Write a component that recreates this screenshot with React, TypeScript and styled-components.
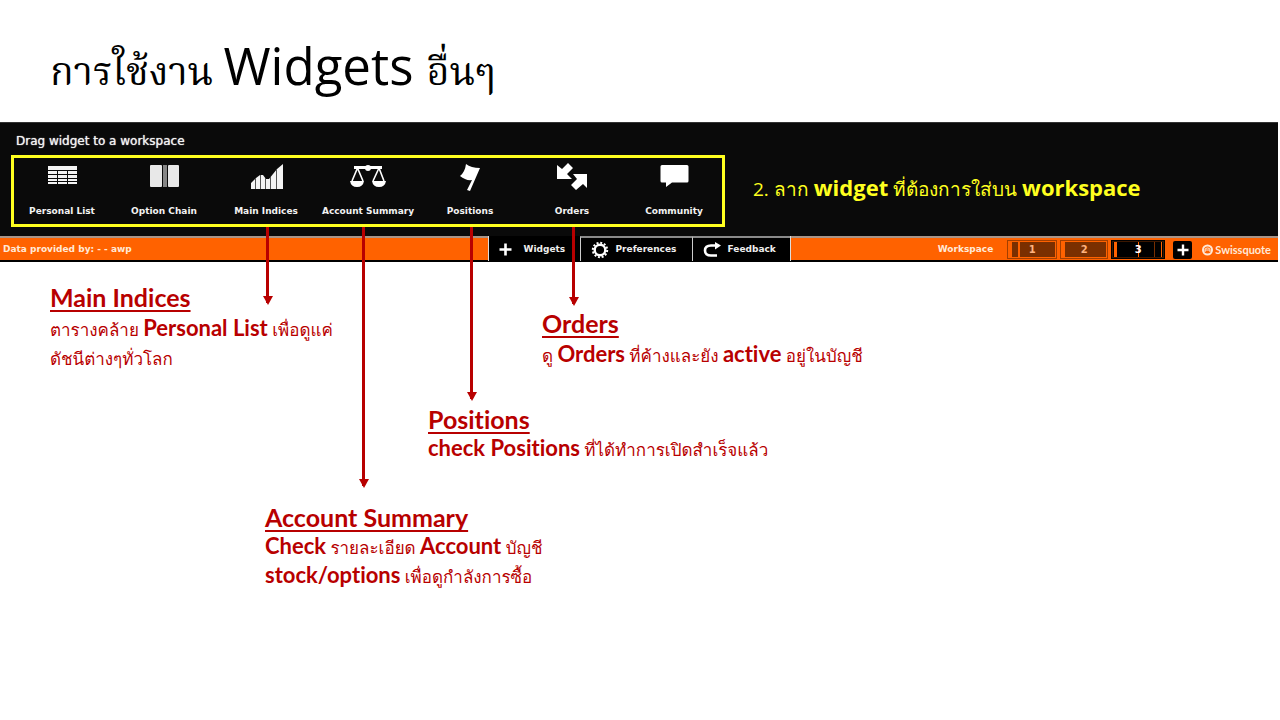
import React from "react";
import styled, { createGlobalStyle } from "styled-components";

const RED = "#b80000";
const YELLOW = "#ffff1f";
const ORANGE = "#ff6200";

const GlobalStyle = createGlobalStyle`
  * { box-sizing: border-box; }
  body { margin: 0; background: #fff; }
`;

const Slide = styled.main`
  font-family: Lato, Loma, "Noto Sans Thai Looped", sans-serif;
  font-variant-ligatures: none;
  min-height: 100vh;
`;

const Title = styled.h1`
  margin: 0;
  height: 122px;
  padding: 26px 50px 0;
  font: 400 51px/78px "Open Sans", serif;
  color: #000;
  white-space: nowrap;
`;

const ThaiTitle = styled.span`
  font-family: "Noto Serif Thai", Norasi, serif;
  font-weight: 400;
  font-size: 39px;
`;

const Panel = styled.section`
  margin-right: 2px;
  background: #0a0a0a;
  border-top: 1px solid #333;
  border-bottom: 2px solid #000;
  font-family: "DejaVu Sans", sans-serif;
`;

const PanelHint = styled.p`
  margin: 0;
  padding: 10px 16px 6px;
  font-size: 12px;
  line-height: 16px;
  color: #f2f2f2;
  text-shadow: 0 0 1px #f2f2f2;
`;

const PanelRow = styled.div`
  display: flex;
  align-items: center;
  padding-left: 11px;
  gap: 28px;
`;

const WidgetList = styled.ul`
  margin: 0;
  padding: 0;
  list-style: none;
  display: grid;
  grid-template-columns: repeat(7, 102px);
  height: 72px;
  box-shadow: inset 0 0 0 3px ${YELLOW};
`;

const WidgetItem = styled.li`
  position: relative;
  display: flex;
  flex-direction: column;
  align-items: center;
`;

const WidgetButton = styled.button`
  border: 0;
  padding: 5px 0 0;
  background: none;
  color: #f2f2f2;
  display: flex;
  flex-direction: column;
  align-items: center;
  gap: 12px;
  font: 700 9px/14px "DejaVu Sans", sans-serif;
  white-space: nowrap;
  svg { display: block; }
`;

const Arrow = styled.span<{ $length: number; $shift?: number }>`
  position: absolute;
  z-index: 2;
  top: 100%;
  left: calc(50% + ${(p) => p.$shift ?? 0}px);
  width: 3px;
  height: ${(p) => p.$length}px;
  background: ${RED};
  &::after {
    content: "";
    position: absolute;
    left: -3px;
    bottom: -2px;
    border: solid transparent;
    border-width: 9px 5px 0;
    border-top-color: ${RED};
  }
`;

const Instruction = styled.p`
  margin: 0;
  padding-bottom: 6px;
  color: ${YELLOW};
  font-size: 19px;
  line-height: 30px;
  font-family: "Open Sans", sans-serif;
  white-space: nowrap;
  b { font-size: 22px; }
`;

const Bar = styled.nav`
  margin-top: 9px;
  height: 24px;
  display: grid;
  grid-template-columns: 1fr auto 1fr;
  background: ${ORANGE};
  color: #ffe9d8;
  font: 700 9px/23px "DejaVu Sans", sans-serif;
`;

const BarSide = styled.div<{ $end?: boolean }>`
  display: flex;
  align-items: center;
  justify-content: ${(p) => (p.$end ? "flex-end" : "flex-start")};
  padding: 0 ${(p) => (p.$end ? 7 : 3)}px;
  border-top: 2px solid #a89488;
`;

const Tabs = styled.div`
  display: flex;
  border-left: 1px solid #ddd;
  border-right: 1px solid #ddd;
`;

const Tab = styled.button<{ $active?: boolean; $width: number }>`
  width: ${(p) => p.$width}px;
  border: 0;
  border-top: 2px solid ${(p) => (p.$active ? "#000" : "#8a8a8a")};
  border-left: ${(p) => (p.$active ? "0" : "1px solid #ccc")};
  padding: 0 0 0 10px;
  background: #000;
  color: #eee;
  font: inherit;
  display: flex;
  align-items: center;
  gap: 7px;
`;

const Spaces = styled.div`
  display: flex;
  gap: 3px;
  margin: 0 8px 0 14px;
`;

const spaceFills = {
  split: `linear-gradient(90deg, ${ORANGE} 4px, #7a2f00 4px 10px, ${ORANGE} 10px 12px, #7a2f00 12px)`,
  plain: `linear-gradient(90deg, ${ORANGE} 4px, #7a2f00 4px)`,
  active: `linear-gradient(90deg, #000 2px, ${ORANGE} 2px 5px, #000 5px 26px, ${ORANGE} 26px 27px, #000 27px 42px, #7a2f00 42px 43px, #000 43px 49px, ${ORANGE} 49px 50px, #000 50px)`,
};

const Space = styled.button<{ $fill: keyof typeof spaceFills; $width: number }>`
  width: ${(p) => p.$width}px;
  height: 19px;
  padding: 0;
  border: 1px solid ${(p) => (p.$fill === "active" ? "#000" : "#a33f00")};
  box-shadow: inset 0 0 0 1px ${(p) => (p.$fill === "active" ? "#3b1700" : ORANGE)};
  background: ${(p) => spaceFills[p.$fill]};
  color: ${(p) => (p.$fill === "active" ? "#fff" : "#ffb27d")};
  font: 700 10px/16px "DejaVu Sans", sans-serif;
`;

const AddButton = styled.button`
  width: 19px;
  height: 18px;
  padding: 0;
  border: 0;
  border-radius: 2px;
  background: #000;
  display: grid;
  place-items: center;
`;

const Brand = styled.a`
  margin-left: 10px;
  display: flex;
  align-items: center;
  gap: 2px;
  color: #ffe9d8;
  text-decoration: none;
  font: 700 11px/18px Lato, sans-serif;
`;

const Notes = styled.section`
  padding: 19px 50px 0;
  color: ${RED};
`;

const NoteRow = styled.div`
  display: grid;
  grid-template-columns: 492px 1fr;
  align-items: start;
`;

const Note = styled.article<{ $indent?: number; $drop?: number; $gap?: number }>`
  margin-left: ${(p) => p.$indent ?? 0}px;
  margin-top: ${(p) => p.$drop ?? 0}px;
  font-size: 17px;
  line-height: 29px;
  white-space: nowrap;
  h2 {
    margin: 0 0 ${(p) => p.$gap ?? 0}px;
    font-size: 25px;
    line-height: 32px;
    font-weight: 700;
    text-decoration: underline;
    text-decoration-thickness: 2px;
    text-underline-offset: 3px;
    text-decoration-skip-ink: none;
  }
  p { margin: 0; }
  b { font-size: 22px; line-height: 0; }
`;

const TableIcon = () => (
  <svg width="32" height="32" viewBox="0 0 32 32" fill="#f4f4f4">
    <path d="M2 6h29v4H2zM2 11h9v3H2zM12 11h9v3h-9zM22 11h9v3h-9zM2 15h9v3H2zM12 15h9v3h-9zM22 15h9v3h-9zM2 19h9v2H2zM12 19h9v2h-9zM22 19h9v2h-9zM2 22h9v2H2zM12 22h9v2h-9zM22 22h9v2h-9z" />
  </svg>
);

const ChainIcon = () => (
  <svg width="32" height="32" viewBox="0 0 32 32">
    <rect x="2" y="5" width="12" height="22" rx="1" fill="#e8e8e8" />
    <rect x="15" y="5" width="4" height="22" fill="#858585" />
    <rect x="20" y="5" width="11" height="22" rx="1" fill="#e8e8e8" />
  </svg>
);

const ChartIcon = () => (
  <svg width="34" height="32" viewBox="0 0 34 32">
    <path d="M2 29V23L7 18 11 15 14 15 17 19 20 19 24 14 28 9 34 4V29Z" fill="#f4f4f4" />
    <path d="M6.500 18V29M11.500 15V29M16.500 18V29M21.500 17V29M27.500 9V29" stroke="#555" />
  </svg>
);

const ScalesIcon = () => (
  <svg width="36" height="32" viewBox="0 0 36 32" fill="none" stroke="#fff" strokeWidth="1.600">
    <path d="M4 7.500H32" strokeWidth="3" />
    <circle cx="18" cy="8" r="3" fill="#fff" stroke="none" />
    <path d="M7.500 8L2 21M7.500 8L13 21M29 8L23 21M29 8L34 21" />
    <path d="M0 21H14Q13 27 7 27T0 21ZM22 21H36Q35 27 29 27T22 21Z" fill="#fff" stroke="none" />
  </svg>
);

const FlagIcon = () => (
  <svg width="32" height="32" viewBox="0 0 32 32" fill="#fff">
    <path d="M12 4Q17 8 26 8L16 31 13 30 18 20Q12 21 6 16Q11 12 12 4Z" />
  </svg>
);

const OrdersIcon = () => (
  <svg width="32" height="32" viewBox="0 0 32 32" fill="#fff">
    <path d="M1 5L6 9 12 3 17 8 11 14 16 19H1Z" />
    <path d="M31 14V28L27 24 20 30 15 25 21 19 17 14Z" />
  </svg>
);

const BubbleIcon = () => (
  <svg width="32" height="32" viewBox="0 0 32 32" fill="#fff">
    <path d="M4 5H29Q30.500 5 30.500 6.500V21Q30.500 22.500 29 22.500H14L8 27V22.500H4Q2.500 22.500 2.500 21V6.500Q2.500 5 4 5Z" />
  </svg>
);

const PlusIcon = () => (
  <svg width="18" height="18" viewBox="0 0 18 18" stroke="#fff" strokeWidth="2.600">
    <path d="M6.500 2.500V14.500M0.500 8.500H12.500" />
  </svg>
);

const GearIcon = () => (
  <svg width="18" height="18" viewBox="0 0 18 18" fill="none" stroke="#fff">
    <circle cx="9" cy="9" r="5.300" strokeWidth="2.400" />
    <circle cx="9" cy="9" r="7.200" strokeWidth="2" strokeDasharray="2 1.770" />
  </svg>
);

const FeedbackIcon = () => (
  <svg width="18" height="16" viewBox="0 0 18 16" fill="none" stroke="#fff" strokeWidth="2.600">
    <path d="M14 13.500H8Q2 13.500 2 8.500T8 3.500H13" />
    <path d="M12 0L18 3.500 12 7.500Z" fill="#fff" stroke="none" />
  </svg>
);

const BrandIcon = () => (
  <svg width="11" height="12" viewBox="0 0 11 12">
    <circle cx="5.500" cy="6" r="4.500" fill={ORANGE} stroke="#ffe9d8" strokeWidth="2" />
    <path d="M3 8V5.500Q3 4 5.500 4T8 5.500V8M3 6H8" stroke="#ffe9d8" fill="none" />
  </svg>
);

const widgets = [
  { label: "Personal List", icon: <TableIcon /> },
  { label: "Option Chain", icon: <ChainIcon /> },
  { label: "Main Indices", icon: <ChartIcon />, arrow: 76, shift: 0 },
  { label: "Account Summary", icon: <ScalesIcon />, arrow: 259, shift: -6 },
  { label: "Positions", icon: <FlagIcon />, arrow: 172, shift: 0 },
  { label: "Orders", icon: <OrdersIcon />, arrow: 77, shift: 0 },
  { label: "Community", icon: <BubbleIcon /> },
];

export default function App() {
  return (
    <>
      <GlobalStyle />
      <Slide>
        <Title>
          <ThaiTitle>การใช้งาน </ThaiTitle>Widgets <ThaiTitle>อื่นๆ</ThaiTitle>
        </Title>
        <Panel>
          <PanelHint>Drag widget to a workspace</PanelHint>
          <PanelRow>
            <WidgetList>
              {widgets.map((w) => (
                <WidgetItem key={w.label}>
                  <WidgetButton type="button">
                    {w.icon}
                    {w.label}
                  </WidgetButton>
                  {w.arrow && <Arrow $length={w.arrow} $shift={w.shift} />}
                </WidgetItem>
              ))}
            </WidgetList>
            <Instruction>
              2. ลาก <b>widget</b> ที่ต้องการใส่บน <b>workspace</b>
            </Instruction>
          </PanelRow>
          <Bar>
            <BarSide>Data provided by: - - awp</BarSide>
            <Tabs>
              <Tab type="button" $active $width={91}><PlusIcon />Widgets</Tab>
              <Tab type="button" $width={112}><GearIcon />Preferences</Tab>
              <Tab type="button" $width={98}><FeedbackIcon />Feedback</Tab>
            </Tabs>
            <BarSide $end>
              Workspace
              <Spaces>
                <Space type="button" $fill="split" $width={50}>1</Space>
                <Space type="button" $fill="plain" $width={48}>2</Space>
                <Space type="button" $fill="active" $width={54}>3</Space>
              </Spaces>
              <AddButton type="button" aria-label="Add workspace">
                <svg width="12" height="12" viewBox="0 0 12 12" stroke="#fff" strokeWidth="2.400">
                  <path d="M6 0.500V11.500M0.500 6H11.500" />
                </svg>
              </AddButton>
              <Brand href="#"><BrandIcon />Swissquote</Brand>
            </BarSide>
          </Bar>
        </Panel>
        <Notes>
          <NoteRow>
            <Note $gap={2}>
              <h2>Main Indices</h2>
              <p>ตารางคล้าย <b>Personal List</b> เพื่อดูแค่<br />ดัชนีต่างๆทั่วโลก</p>
            </Note>
            <Note $drop={26} $gap={2}>
              <h2>Orders</h2>
              <p>ดู <b>Orders</b> ที่ค้างและยัง <b>active</b> อยู่ในบัญชี</p>
            </Note>
          </NoteRow>
          <Note $indent={378} $drop={30}>
            <h2>Positions</h2>
            <p><b>check Positions</b> ที่ได้ทำการเปิดสำเร็จแล้ว</p>
          </Note>
          <Note $indent={215} $drop={37}>
            <h2>Account Summary</h2>
            <p><b>Check</b> รายละเอียด <b>Account</b> บัญชี<br /><b>stock/options</b> เพื่อดูกำลังการซื้อ</p>
          </Note>
        </Notes>
      </Slide>
    </>
  );
}
